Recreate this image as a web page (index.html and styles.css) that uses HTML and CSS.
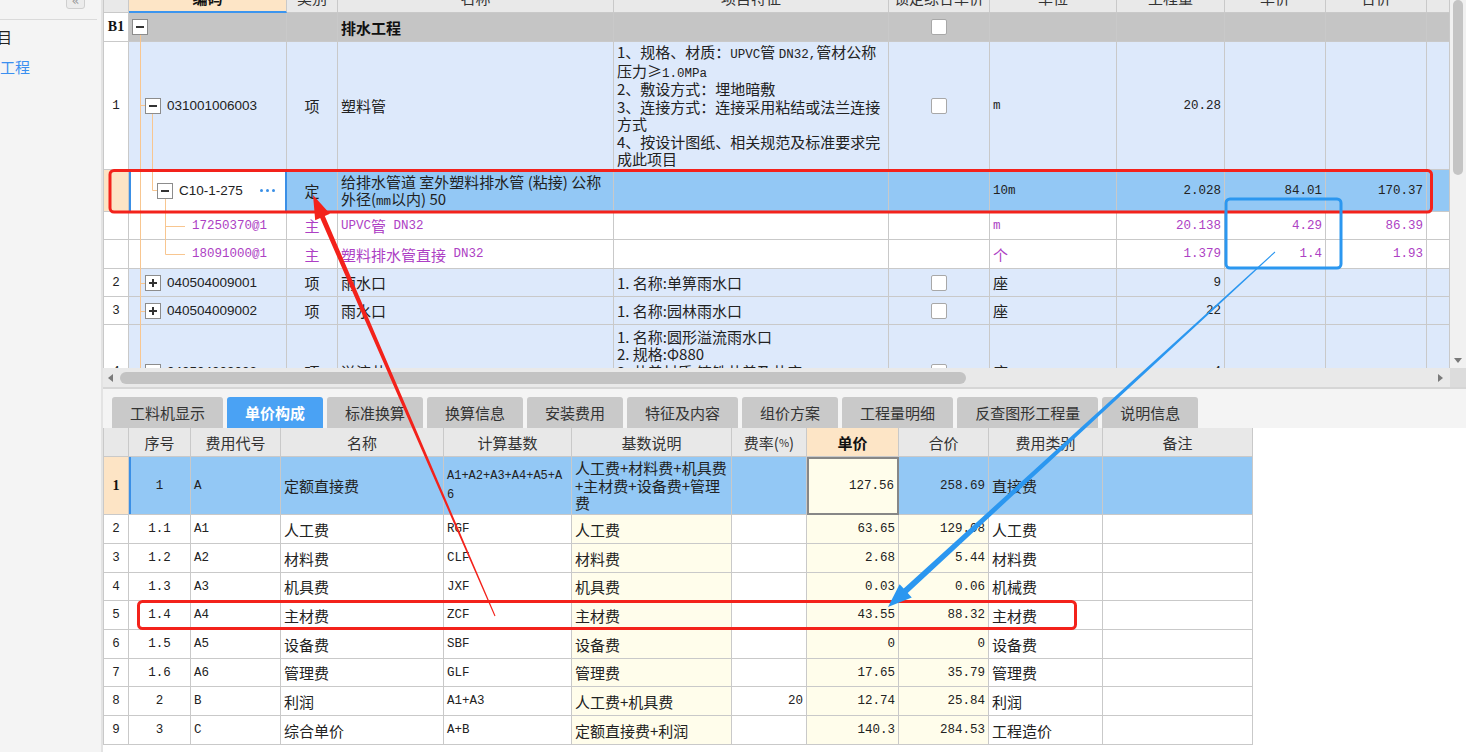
FILE: index.html
```html
<!DOCTYPE html>
<html lang="zh-CN">
<head>
<meta charset="utf-8">
<title>单价构成</title>
<link rel="stylesheet" href="styles.css">
</head>
<body>
<div class="app">
  <aside class="side">
    <div class="side-head"><span class="collapse">«</span></div>
    <div class="side-item side-dark">项目</div>
    <div class="side-item side-blue">排水工程</div>
  </aside>

  <main class="main">
    <section class="top">
      <div class="gt">
        <div class="r th h13">
          <div class="c rn"></div>
          <div class="c hsel"><span>编码</span></div>
          <div class="c"><span>类别</span></div>
          <div class="c"><span>名称</span></div>
          <div class="c"><span>项目特征</span></div>
          <div class="c"><span>锁定综合单价</span></div>
          <div class="c"><span>单位</span></div>
          <div class="c"><span>工程量</span></div>
          <div class="c"><span>单价</span></div>
          <div class="c"><span>合价</span></div>
          <div class="c"></div>
        </div>

        <div class="r grp h29">
          <div class="c rn b1">B1</div>
          <div class="c l0"><i class="bx minus"></i></div>
          <div class="c"></div>
          <div class="c strong">排水工程</div>
          <div class="c"></div>
          <div class="c ctr"><i class="cb"></i></div>
          <div class="c"></div><div class="c"></div><div class="c"></div><div class="c"></div><div class="c"></div>
        </div>

        <div class="r lb h128">
          <div class="c rn m">1</div>
          <div class="c l1"><i class="bx minus"></i><span class="code">031001006003</span></div>
          <div class="c ctr">项</div>
          <div class="c">塑料管</div>
          <div class="c"><div class="ml">1、规格、材质：<span class="m">UPVC</span>管 <span class="m">DN32,</span>管材公称<br>压力≥<span class="m">1.0MPa</span><br>2、敷设方式：埋地暗敷<br>3、连接方式：连接采用粘结或法兰连接<br>方式<br>4、按设计图纸、相关规范及标准要求完<br>成此项目</div></div>
          <div class="c ctr"><i class="cb"></i></div>
          <div class="c m">m</div>
          <div class="c rt m">20.28</div>
          <div class="c"></div><div class="c"></div><div class="c"></div>
        </div>

        <div class="r sel h42">
          <div class="c rn"></div>
          <div class="c edit l2"><i class="bx minus"></i><span class="code">C10-1-275</span><span class="dots"><i></i><i></i><i></i></span></div>
          <div class="c ctr">定</div>
          <div class="c"><div class="ml2">给排水管道 室外塑料排水管 (粘接) 公称<br>外径(<span class="m">mm</span>以内) 50</div></div>
          <div class="c"></div>
          <div class="c"></div>
          <div class="c m">10m</div>
          <div class="c rt m">2.028</div>
          <div class="c rt m">84.01</div>
          <div class="c rt m">170.37</div>
          <div class="c"></div>
        </div>

        <div class="r wh pu h28">
          <div class="c rn"></div>
          <div class="c l3 m">17250370@1</div>
          <div class="c ctr">主</div>
          <div class="c"><span class="m">UPVC</span>管<span class="m">&nbsp;DN32</span></div>
          <div class="c"></div>
          <div class="c"></div>
          <div class="c m">m</div>
          <div class="c rt m">20.138</div>
          <div class="c rt m">4.29</div>
          <div class="c rt m">86.39</div>
          <div class="c"></div>
        </div>

        <div class="r wh pu h29">
          <div class="c rn"></div>
          <div class="c l3 m">18091000@1</div>
          <div class="c ctr">主</div>
          <div class="c">塑料排水管直接<span class="m">&nbsp;DN32</span></div>
          <div class="c"></div>
          <div class="c"></div>
          <div class="c">个</div>
          <div class="c rt m">1.379</div>
          <div class="c rt m">1.4</div>
          <div class="c rt m">1.93</div>
          <div class="c"></div>
        </div>

        <div class="r lb h28">
          <div class="c rn m">2</div>
          <div class="c l1"><i class="bx plus"></i><span class="code">040504009001</span></div>
          <div class="c ctr">项</div>
          <div class="c">雨水口</div>
          <div class="c">1. 名称:单箅雨水口</div>
          <div class="c ctr"><i class="cb"></i></div>
          <div class="c">座</div>
          <div class="c rt m">9</div>
          <div class="c"></div><div class="c"></div><div class="c"></div>
        </div>

        <div class="r lb h28">
          <div class="c rn m">3</div>
          <div class="c l1"><i class="bx plus"></i><span class="code">040504009002</span></div>
          <div class="c ctr">项</div>
          <div class="c">雨水口</div>
          <div class="c">1. 名称:园林雨水口</div>
          <div class="c ctr"><i class="cb"></i></div>
          <div class="c">座</div>
          <div class="c rt m">22</div>
          <div class="c"></div><div class="c"></div><div class="c"></div>
        </div>

        <div class="r lb h94">
          <div class="c rn m">4</div>
          <div class="c l1"><i class="bx plus"></i><span class="code">040504009003</span></div>
          <div class="c ctr">项</div>
          <div class="c">溢流井</div>
          <div class="c"><div class="ml">1. 名称:圆形溢流雨水口<br>2. 规格:Φ880<br>3. 井盖材质:铸铁井盖及井座<br>4. 做法:详见设计图纸<br>5. 其他:满足规范要求</div></div>
          <div class="c ctr"><i class="cb"></i></div>
          <div class="c">座</div>
          <div class="c rt m">4</div>
          <div class="c"></div><div class="c"></div><div class="c"></div>
        </div>

        <svg class="tree" width="200" height="368" viewBox="103 0 200 368">
          <g stroke="#f8c690" stroke-width="1" fill="none">
            <path d="M140.5 35 V368"/>
            <path d="M140.5 105.5 H145"/>
            <path d="M152.5 114 V190.5 H157"/>
            <path d="M165.5 199 V254.5"/>
            <path d="M165.5 226.5 H185"/>
            <path d="M165.5 254.5 H185"/>
            <path d="M140.5 283.5 H145"/>
            <path d="M140.5 311.5 H145"/>
          </g>
        </svg>
      </div>
      <div class="vscroll">
        <div class="vthumb"></div>
        <div class="vdown"></div>
      </div>
    </section>

    <div class="hscroll">
      <i class="al"></i>
      <div class="hthumb"></div>
      <i class="ar"></i>
      <div class="corner"></div>
    </div>

    <nav class="tabs">
      <div class="tab">工料机显示</div>
      <div class="tab on">单价构成</div>
      <div class="tab">标准换算</div>
      <div class="tab">换算信息</div>
      <div class="tab">安装费用</div>
      <div class="tab">特征及内容</div>
      <div class="tab">组价方案</div>
      <div class="tab">工程量明细</div>
      <div class="tab">反查图形工程量</div>
      <div class="tab">说明信息</div>
    </nav>

    <section class="bottom">
      <div class="gb">
        <div class="r th2 h29">
          <div class="c rn"></div>
          <div class="c">序号</div>
          <div class="c">费用代号</div>
          <div class="c">名称</div>
          <div class="c">计算基数</div>
          <div class="c">基数说明</div>
          <div class="c">费率(<span class="pct">%</span>)</div>
          <div class="c hp">单价</div>
          <div class="c">合价</div>
          <div class="c">费用类别</div>
          <div class="c">备注</div>
        </div>

        <div class="r bsel h58">
          <div class="c rn b1">1</div>
          <div class="c ctr m mark">1</div>
          <div class="c m">A</div>
          <div class="c">定额直接费</div>
          <div class="c"><div class="ml3 m">A1+A2+A3+A4+A5+A<br>6</div></div>
          <div class="c"><div class="ml">人工费+材料费+机具费<br>+主材费+设备费+管理<br>费</div></div>
          <div class="c"></div>
          <div class="c rt m focus">127.56</div>
          <div class="c rt m">258.69</div>
          <div class="c">直接费</div>
          <div class="c"></div>
        </div>

        <div class="r h29">
          <div class="c rn m">2</div><div class="c ctr m">1.1</div><div class="c m">A1</div><div class="c">人工费</div><div class="c m">RGF</div><div class="c cr">人工费</div><div class="c"></div><div class="c rt m cr">63.65</div><div class="c rt m cr">129.08</div><div class="c">人工费</div><div class="c"></div>
        </div>
        <div class="r h29">
          <div class="c rn m">3</div><div class="c ctr m">1.2</div><div class="c m">A2</div><div class="c">材料费</div><div class="c m">CLF</div><div class="c cr">材料费</div><div class="c"></div><div class="c rt m cr">2.68</div><div class="c rt m cr">5.44</div><div class="c">材料费</div><div class="c"></div>
        </div>
        <div class="r h28">
          <div class="c rn m">4</div><div class="c ctr m">1.3</div><div class="c m">A3</div><div class="c">机具费</div><div class="c m">JXF</div><div class="c cr">机具费</div><div class="c"></div><div class="c rt m cr">0.03</div><div class="c rt m cr">0.06</div><div class="c">机械费</div><div class="c"></div>
        </div>
        <div class="r h29">
          <div class="c rn m">5</div><div class="c ctr m">1.4</div><div class="c m">A4</div><div class="c">主材费</div><div class="c m">ZCF</div><div class="c cr">主材费</div><div class="c"></div><div class="c rt m cr">43.55</div><div class="c rt m cr">88.32</div><div class="c">主材费</div><div class="c"></div>
        </div>
        <div class="r h29">
          <div class="c rn m">6</div><div class="c ctr m">1.5</div><div class="c m">A5</div><div class="c">设备费</div><div class="c m">SBF</div><div class="c cr">设备费</div><div class="c"></div><div class="c rt m cr">0</div><div class="c rt m cr">0</div><div class="c">设备费</div><div class="c"></div>
        </div>
        <div class="r h28">
          <div class="c rn m">7</div><div class="c ctr m">1.6</div><div class="c m">A6</div><div class="c">管理费</div><div class="c m">GLF</div><div class="c cr">管理费</div><div class="c"></div><div class="c rt m cr">17.65</div><div class="c rt m cr">35.79</div><div class="c">管理费</div><div class="c"></div>
        </div>
        <div class="r h29">
          <div class="c rn m">8</div><div class="c ctr m">2</div><div class="c m">B</div><div class="c">利润</div><div class="c m">A1+A3</div><div class="c cr">人工费+机具费</div><div class="c rt m">20</div><div class="c rt m cr">12.74</div><div class="c rt m cr">25.84</div><div class="c">利润</div><div class="c"></div>
        </div>
        <div class="r h29">
          <div class="c rn m">9</div><div class="c ctr m">3</div><div class="c m">C</div><div class="c">综合单价</div><div class="c m">A+B</div><div class="c cr">定额直接费+利润</div><div class="c"></div><div class="c rt m cr">140.3</div><div class="c rt m cr">284.53</div><div class="c">工程造价</div><div class="c"></div>
        </div>
      </div>
    </section>
  </main>
</div>

<svg class="marks" width="1466" height="752" viewBox="0 0 1466 752">
  <rect x="110" y="170.5" width="1321.5" height="41.5" rx="4" fill="none" stroke="#f3221b" stroke-width="3"/>
  <rect x="138.5" y="601.5" width="937" height="27" rx="4" fill="none" stroke="#f3221b" stroke-width="3"/>
  <rect x="1226" y="199" width="115" height="69" rx="4" fill="none" stroke="#2b97f0" stroke-width="3"/>
  <polygon points="495.5,615.8 324.8,216.0 329.9,213.8 313,195 315.2,220.2 320.2,218.0 494.5,616.2" fill="#f3221b"/>
  <polygon points="1275.3,252.4 907.7,593.0 911.8,597.4 888,607 899.6,584.2 903.7,588.6 1274.7,251.6" fill="#2b97f0"/>
</svg>
</body>
</html>
```

FILE: styles.css
```css
* { box-sizing: border-box; margin: 0; padding: 0; }
html, body { width: 1466px; height: 752px; overflow: hidden; }
body {
  position: relative;
  background: #fff;
  font-family: "Noto Sans CJK SC", "Liberation Sans", sans-serif;
  font-size: 15px;
  color: #222;
}
i { font-style: normal; }

.app { display: flex; height: 752px; }

/* left panel */
.side {
  width: 103px;
  flex: none;
  background: #f4f4f4;
  border-right: 2px solid #e3e3e3;
  overflow: hidden;
}
.side-head {
  display: flex;
  align-items: flex-start;
  width: 97px;
  height: 20px;
  border-bottom: 1px solid #dadada;
}
.collapse {
  display: flex;
  align-items: flex-end;
  justify-content: center;
  width: 19px;
  height: 18px;
  margin-left: 66px;
  margin-top: -9px;
  border: 1px solid #cfcfcf;
  border-radius: 3px;
  background: #ececec;
  color: #9a9a9a;
  font-family: "DejaVu Sans", sans-serif;
  font-size: 13px;
  line-height: 14px;
}
.side-item { height: 30px; line-height: 30px; white-space: nowrap; }
.side-dark { margin-top: 2px; margin-left: -18px; color: #222; }
.side-blue { margin-left: -30px; color: #3b8ff0; }

/* main area */
.main { flex: 1; display: flex; flex-direction: column; min-width: 0; }
.top { display: flex; height: 368px; flex: none; }
.gt { position: relative; width: 1347px; overflow: hidden; }

.r { display: grid; }
.gt .r { grid-template-columns: 26px 158px 51px 276px 275px 101px 127px 108px 101px 101px 23px; }
.gb .r { grid-template-columns: 26px 62px 90px 163px 128px 160px 75px 92px 90px 114px 150px; width: 1150px; }

.h13 { height: 13px; }
.h28 { height: 28px; }
.h29 { height: 29px; }
.h42 { height: 42px; }
.h58 { height: 58px; }
.h94 { height: 94px; }
.h128 { height: 128px; }

.c {
  border-right: 1px solid #c9c9c9;
  border-bottom: 1px solid #c9c9c9;
  display: flex;
  align-items: center;
  overflow: hidden;
  white-space: nowrap;
  padding: 0 3px;
}
.rn {
  border-left: 1px solid #c9c9c9;
  justify-content: center;
  background: #fff;
  padding: 0;
}
.ctr { justify-content: center; }
.rt { justify-content: flex-end; }
.m { font-family: "Liberation Mono", monospace; font-size: 12.5px; }
.b1 { font-family: "Liberation Serif", serif; font-weight: 700; font-size: 14px; color: #111; }
.strong { font-weight: 700; color: #111; }
.ml { line-height: 17.5px; }
.ml2 { line-height: 17px; }
.ml .m, .ml2 .m { line-height: 1; }
.ml3 { line-height: 19px; font-size: 12px; }

/* top header */
.th .c {
  background: #e9e9e9;
  align-items: flex-start;
  justify-content: center;
  color: #333;
  padding: 0;
}
.th .c span { display: block; line-height: 20px; margin-top: -12px; }
.th .hsel {
  background: #fde5c6;
  border-bottom: 2px solid #3c95ee;
  font-weight: 700;
  color: #111;
}

/* row variants */
.grp .c { background: #c5c5c5; }
.grp .rn { background: #fff; }
.lb .c { background: #dde9fb; }
.lb .rn { background: #fff; }
.wh .c { background: #fff; }
.pu .c { color: #ad3fc4; }
.sel .c { background: #93c8f5; }
.sel .rn { background: #fde4c5; }
.sel .edit {
  background: #fff;
  border-left: 2px solid #3a8fe6;
  border-right: 2px solid #3a8fe6;
}

.l0 { padding-left: 3px; }
.l1 { padding-left: 16px; }
.l2 { padding-left: 26px; }
.l3 { padding-left: 63px; }

.code { font-family: "Liberation Sans", sans-serif; font-size: 13.5px; color: #222; }

.bx {
  position: relative;
  flex: none;
  width: 16px;
  height: 16px;
  border: 1px solid #8c8c8c;
  background: #fff;
  margin-right: 6px;
}
.bx::before {
  content: "";
  position: absolute;
  left: 3px;
  top: 6px;
  width: 8px;
  height: 2px;
  background: #333;
}
.plus::after {
  content: "";
  position: absolute;
  left: 6px;
  top: 3px;
  width: 2px;
  height: 8px;
  background: #333;
}

.dots { margin-left: auto; margin-right: 7px; display: flex; gap: 3px; }
.dots i { width: 3px; height: 3px; border-radius: 50%; background: #3a8fe6; }

.cb {
  width: 16px;
  height: 16px;
  border: 1px solid #a8a8a8;
  border-radius: 2px;
  background: #fff;
}

.tree { position: absolute; left: 0; top: 0; pointer-events: none; }

/* scrollbars */
.vscroll {
  width: 16px;
  background: #f1f1f1;
  display: flex;
  flex-direction: column;
  justify-content: space-between;
  align-items: center;
}
.vthumb { width: 10px; height: 175px; border-radius: 5px; background: #c4c4c4; }
.vdown {
  margin-bottom: 5px;
  border-left: 4px solid transparent;
  border-right: 4px solid transparent;
  border-top: 5px solid #7a7a7a;
}

.hscroll {
  flex: none;
  height: 19px;
  background: #e9e9e9;
  display: flex;
  align-items: center;
}
.al {
  margin-left: 5px;
  border-top: 4px solid transparent;
  border-bottom: 4px solid transparent;
  border-right: 5px solid #7a7a7a;
}
.hthumb { margin-left: 7px; width: 846px; height: 12px; border-radius: 6px; background: #c3c3c3; }
.ar {
  margin-left: auto;
  margin-right: 7px;
  border-top: 4px solid transparent;
  border-bottom: 4px solid transparent;
  border-left: 5px solid #7a7a7a;
}
.corner { width: 16px; height: 19px; background: #dcdcdc; }

/* tabs */
.tabs {
  flex: none;
  height: 41px;
  border-top: 2px solid #d6d6d6;
  background: #f4f4f4;
  display: flex;
  align-items: flex-end;
  gap: 4px;
  padding-left: 9px;
}
.tab {
  height: 31px;
  padding: 0 18px;
  background: #c9c9c9;
  border-radius: 3px 3px 0 0;
  display: flex;
  align-items: center;
  color: #333;
  font-size: 15px;
  white-space: nowrap;
}
.tab.on { background: #4aa2f4; color: #fff; font-weight: 700; }

/* bottom table */
.bottom { flex: 1; background: #fff; }
.th2 .c { background: #e8e8e8; justify-content: center; color: #333; padding: 0; }
.th2 .hp { background: #fde5c6; font-weight: 700; color: #111; }
.pct { font-size: 11px; }
.cr { background: #fffdeb; }
.bsel .c { background: #93c8f5; }
.bsel .rn { background: #fde4c5; }
.bsel .mark { box-shadow: inset 2px 0 0 #3a8fe6; }
.bsel .focus { background: #fffdeb; border: 2px solid #878787; }

/* annotation overlay */
.marks { position: absolute; left: 0; top: 0; pointer-events: none; }
```
